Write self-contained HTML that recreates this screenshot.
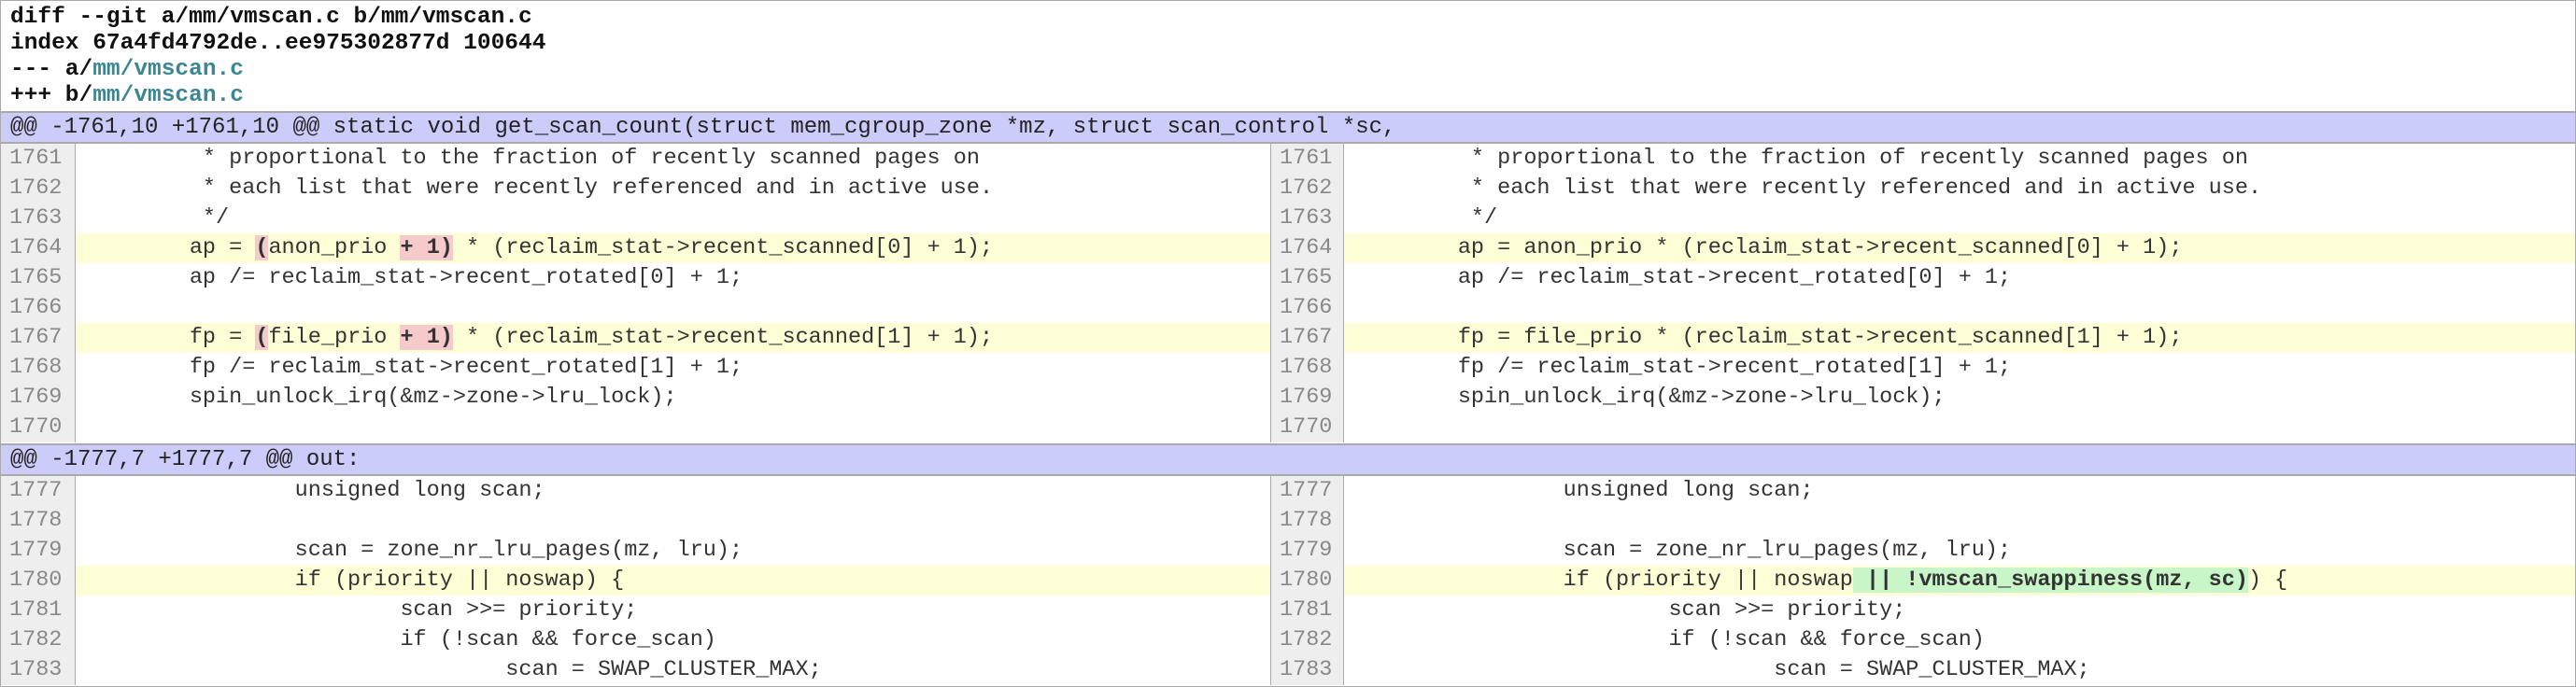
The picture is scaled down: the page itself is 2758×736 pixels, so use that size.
<!DOCTYPE html>
<html><head><meta charset="utf-8"><style>
html,body{margin:0;padding:0;background:#fff}
#w{position:relative;width:2756px;height:734px;border:1px solid #aaa;overflow:hidden;font-family:"Liberation Mono",monospace;color:#333}
.h{position:absolute;left:10px;font-weight:bold;font-size:24.5px;line-height:28px;white-space:pre;color:#111}
.h .f{color:#3a8793}
.hk{position:absolute;left:0;width:2756px;background:#ccccfa;border-top:2px solid #aaa;border-bottom:2px solid #aaa;font-size:24px;white-space:pre;box-sizing:border-box;padding-left:10px;color:#222}
.r{position:absolute;left:0;width:2756px;height:32px;font-size:23.5px;line-height:32px;white-space:pre}
.r div{position:absolute;top:0;height:32px}
.g1{left:0;width:79px;background:#eee;border-right:1px solid #aaa;color:#888;padding-left:0;text-indent:9px}
.c1{left:80px;width:1279px;text-indent:9px}
.g2{left:1359px;width:77px;background:#eee;border-left:1px solid #aaa;border-right:1px solid #aaa;color:#888;text-indent:9px}
.c2{left:1438px;width:1318px;text-indent:9px}
.y{background:#fefed6}
.d{background:#f6c9cc;font-weight:bold}
.a{background:#c9f6c9;font-weight:bold}
</style></head><body><div id="w">
<div class="h" style="top:4px">diff --git a/mm/vmscan.c b/mm/vmscan.c</div>
<div class="h" style="top:32px">index 67a4fd4792de..ee975302877d 100644</div>
<div class="h" style="top:60px">--- a/<span class="f">mm/vmscan.c</span></div>
<div class="h" style="top:88px">+++ b/<span class="f">mm/vmscan.c</span></div>
<div class="hk" style="top:118px;height:35px;line-height:31px">@@ -1761,10 +1761,10 @@ static void get_scan_count(struct mem_cgroup_zone *mz, struct scan_control *sc,</div>

<div class="r" style="top:153px"><div class="g1">1761</div><div class="c1">         * proportional to the fraction of recently scanned pages on</div><div class="g2">1761</div><div class="c2">         * proportional to the fraction of recently scanned pages on</div></div>
<div class="r" style="top:185px"><div class="g1">1762</div><div class="c1">         * each list that were recently referenced and in active use.</div><div class="g2">1762</div><div class="c2">         * each list that were recently referenced and in active use.</div></div>
<div class="r" style="top:217px"><div class="g1">1763</div><div class="c1">         */</div><div class="g2">1763</div><div class="c2">         */</div></div>
<div class="r" style="top:249px"><div class="g1">1764</div><div class="c1 y">        ap = <span class="d">(</span>anon_prio <span class="d">+ 1)</span> * (reclaim_stat-&gt;recent_scanned[0] + 1);</div><div class="g2">1764</div><div class="c2 y">        ap = anon_prio * (reclaim_stat-&gt;recent_scanned[0] + 1);</div></div>
<div class="r" style="top:281px"><div class="g1">1765</div><div class="c1">        ap /= reclaim_stat-&gt;recent_rotated[0] + 1;</div><div class="g2">1765</div><div class="c2">        ap /= reclaim_stat-&gt;recent_rotated[0] + 1;</div></div>
<div class="r" style="top:313px"><div class="g1">1766</div><div class="c1"></div><div class="g2">1766</div><div class="c2"></div></div>
<div class="r" style="top:345px"><div class="g1">1767</div><div class="c1 y">        fp = <span class="d">(</span>file_prio <span class="d">+ 1)</span> * (reclaim_stat-&gt;recent_scanned[1] + 1);</div><div class="g2">1767</div><div class="c2 y">        fp = file_prio * (reclaim_stat-&gt;recent_scanned[1] + 1);</div></div>
<div class="r" style="top:377px"><div class="g1">1768</div><div class="c1">        fp /= reclaim_stat-&gt;recent_rotated[1] + 1;</div><div class="g2">1768</div><div class="c2">        fp /= reclaim_stat-&gt;recent_rotated[1] + 1;</div></div>
<div class="r" style="top:409px"><div class="g1">1769</div><div class="c1">        spin_unlock_irq(&amp;mz-&gt;zone-&gt;lru_lock);</div><div class="g2">1769</div><div class="c2">        spin_unlock_irq(&amp;mz-&gt;zone-&gt;lru_lock);</div></div>
<div class="r" style="top:441px"><div class="g1">1770</div><div class="c1"></div><div class="g2">1770</div><div class="c2"></div></div>

<div class="hk" style="top:474px;height:35px;line-height:31px">@@ -1777,7 +1777,7 @@ out:</div>

<div class="r" style="top:509px"><div class="g1">1777</div><div class="c1">                unsigned long scan;</div><div class="g2">1777</div><div class="c2">                unsigned long scan;</div></div>
<div class="r" style="top:541px"><div class="g1">1778</div><div class="c1"></div><div class="g2">1778</div><div class="c2"></div></div>
<div class="r" style="top:573px"><div class="g1">1779</div><div class="c1">                scan = zone_nr_lru_pages(mz, lru);</div><div class="g2">1779</div><div class="c2">                scan = zone_nr_lru_pages(mz, lru);</div></div>
<div class="r" style="top:605px"><div class="g1">1780</div><div class="c1 y">                if (priority || noswap) {</div><div class="g2">1780</div><div class="c2 y">                if (priority || noswap<span class="a"> || !vmscan_swappiness(mz, sc)</span>) {</div></div>
<div class="r" style="top:637px"><div class="g1">1781</div><div class="c1">                        scan &gt;&gt;= priority;</div><div class="g2">1781</div><div class="c2">                        scan &gt;&gt;= priority;</div></div>
<div class="r" style="top:669px"><div class="g1">1782</div><div class="c1">                        if (!scan &amp;&amp; force_scan)</div><div class="g2">1782</div><div class="c2">                        if (!scan &amp;&amp; force_scan)</div></div>
<div class="r" style="top:701px"><div class="g1">1783</div><div class="c1">                                scan = SWAP_CLUSTER_MAX;</div><div class="g2">1783</div><div class="c2">                                scan = SWAP_CLUSTER_MAX;</div></div>
</div></body></html>
